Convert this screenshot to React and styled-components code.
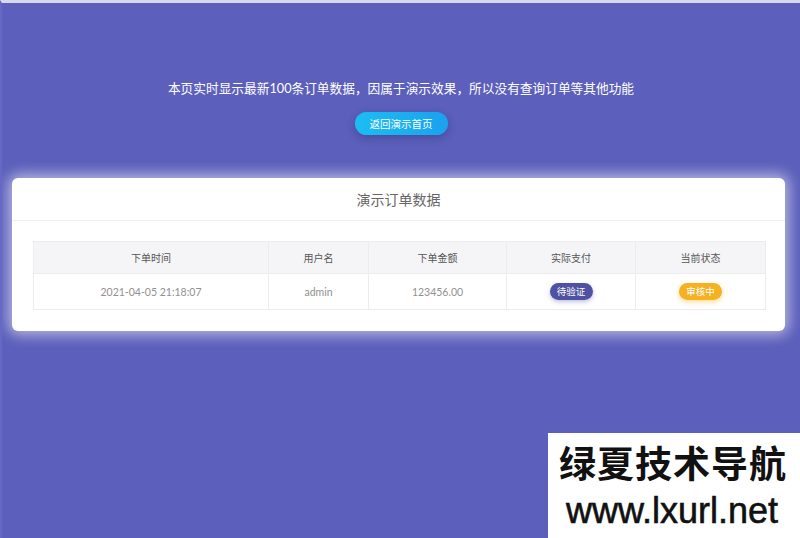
import React from "react";
import styled, { createGlobalStyle } from "styled-components";

const Global = createGlobalStyle`
  html, body { margin: 0; padding: 0; }
  body {
    background: #5c5fbb;
    font-family: Lato, "Noto Sans CJK SC", sans-serif;
  }
`;

const Page = styled.div`
  position: relative;
  height: 538px;
  box-sizing: border-box;
  border-top: 3px solid #d9d9ee;
  border-left: 2px solid #6669c4;
  overflow: hidden;
`;

const Intro = styled.div`
  display: flex;
  flex-direction: column;
  align-items: center;
  padding-top: 76px;
`;

const Notice = styled.p`
  margin: 0;
  color: #ffffff;
  font-size: 12.7px;
  line-height: 18px;
`;

const BackButton = styled.a`
  margin-top: 15px;
  width: 93px;
  height: 23px;
  border-radius: 12px;
  background: linear-gradient(90deg, #1cbdf2, #1aa2ee);
  color: #fff;
  font-size: 10.5px;
  display: flex;
  align-items: center;
  justify-content: center;
  box-shadow: 0 3px 8px rgba(20, 30, 90, 0.3);
  text-decoration: none;
`;

const Card = styled.section`
  margin: 43px 15px 0 10px;
  background: #fff;
  border-radius: 6px;
  box-shadow: 0 0 14px 4px rgba(255, 255, 255, 0.55);
`;

const CardHeader = styled.h2`
  margin: 0;
  height: 42px;
  border-bottom: 1px solid #eeeeee;
  display: flex;
  align-items: center;
  justify-content: center;
  font-weight: normal;
  font-size: 14px;
  color: #666;
`;

const CardBody = styled.div`
  padding: 20px 20px 21px 21px;
`;

const Table = styled.table`
  width: 100%;
  border-collapse: collapse;
  table-layout: fixed;
  border: 1px solid #ededed;
  font-size: 10px;
`;

const Th = styled.th`
  height: 31px;
  padding: 0;
  background: #f5f5f8;
  color: #555;
  font-weight: normal;
  border: 1px solid #ececec;
  text-align: center;
`;

const Td = styled.td`
  height: 35px;
  padding: 0;
  color: #919191;
  font-size: 10.5px;
  border: 1px solid #ececec;
  text-align: center;
`;

const Badge = styled.span`
  display: inline-block;
  width: 43px;
  height: 17px;
  line-height: 17px;
  border-radius: 9px;
  color: #fff;
  font-size: 9.5px;
  background: ${(p) => p.$bg};
  box-shadow: ${(p) => p.$glow};
`;

const Watermark = styled.div`
  position: absolute;
  left: 546px;
  top: 430px;
  width: 254px;
  height: 108px;
  padding-top: 9px;
  box-sizing: border-box;
  background: #fff;
  display: flex;
  flex-direction: column;
  align-items: center;
  color: #111;
`;

const WmTitle = styled.div`
  font-family: "Noto Sans CJK SC", sans-serif;
  font-weight: 700;
  font-size: 37px;
  line-height: 40px;
  letter-spacing: 1px;
  margin-right: 4px;
`;

const WmUrl = styled.div`
  margin-top: 10px;
  font-family: "Liberation Sans", sans-serif;
  font-size: 36px;
  line-height: 38px;
  -webkit-text-stroke: 0.6px #111;
  margin-right: 6px;
`;

const cols = [235, 100, 138, 129, 130];

export default function App() {
  return (
    <>
      <Global />
      <Page>
        <Intro>
          <Notice>本页实时显示最新100条订单数据，因属于演示效果，所以没有查询订单等其他功能</Notice>
          <BackButton href="#">返回演示首页</BackButton>
        </Intro>
        <Card>
          <CardHeader>演示订单数据</CardHeader>
          <CardBody>
            <Table>
              <colgroup>
                {cols.map((w, i) => (
                  <col key={i} style={{ width: w }} />
                ))}
              </colgroup>
              <thead>
                <tr>
                  <Th>下单时间</Th>
                  <Th>用户名</Th>
                  <Th>下单金额</Th>
                  <Th>实际支付</Th>
                  <Th>当前状态</Th>
                </tr>
              </thead>
              <tbody>
                <tr>
                  <Td>2021-04-05 21:18:07</Td>
                  <Td>admin</Td>
                  <Td>123456.00</Td>
                  <Td>
                    <Badge $bg="#4f51a3" $glow="0 2px 4px rgba(79,81,163,0.35)">待验证</Badge>
                  </Td>
                  <Td>
                    <Badge $bg="#f4b122" $glow="0 2px 5px rgba(244,177,34,0.45)">审核中</Badge>
                  </Td>
                </tr>
              </tbody>
            </Table>
          </CardBody>
        </Card>
        <Watermark>
          <WmTitle>绿夏技术导航</WmTitle>
          <WmUrl>www.lxurl.net</WmUrl>
        </Watermark>
      </Page>
    </>
  );
}
